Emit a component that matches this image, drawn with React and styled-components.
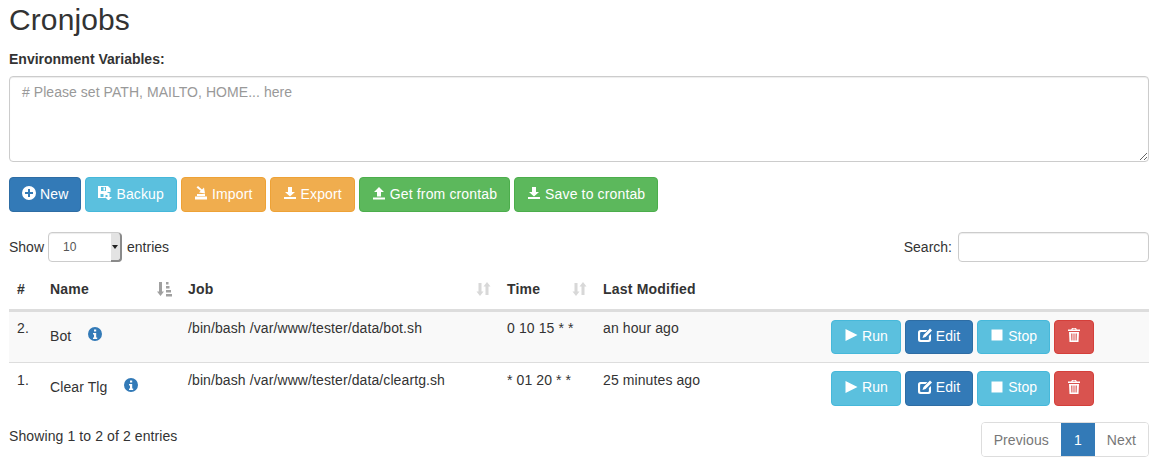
import React from 'react'
import styled, { createGlobalStyle } from 'styled-components'

const GlobalStyle = createGlobalStyle`
  * { box-sizing: border-box; }
  body {
    margin: 0;
    background: #fff;
    color: #333;
    font-family: "Liberation Sans", Arial, sans-serif;
    font-size: 14px;
    line-height: 20px;
    letter-spacing: .1px;
  }
`

const Page = styled.div`
  padding: 0 12px 0 9px;
`

const Title = styled.h1`
  margin: 0;
  padding-top: 3px;
  font-size: 30px;
  line-height: 33px;
  font-weight: 500;
`

const Label = styled.label`
  display: block;
  margin-top: 13px;
  height: 20px;
  font-weight: bold;
  letter-spacing: 0;
`

const EnvInput = styled.textarea`
  display: block;
  width: 100%;
  height: 86px;
  margin-top: 7px;
  padding: 5px 12px;
  border: 1px solid #ccc;
  border-radius: 4px;
  box-shadow: inset 0 1px 1px rgba(0, 0, 0, .075);
  font: 14px/20px "Liberation Sans", Arial, sans-serif;
  letter-spacing: .05px;
  &::placeholder { color: #999; opacity: 1; }
`

const Toolbar = styled.div`
  display: flex;
  gap: 4px;
  margin-top: 15px;
`

const colors = {
  primary: ['#337ab7', '#2e6da4'],
  info: ['#5bc0de', '#46b8da'],
  warning: ['#f0ad4e', '#eea236'],
  success: ['#5cb85c', '#4cae4c'],
  danger: ['#d9534f', '#d43f3a'],
}

const Button = styled.button`
  display: inline-flex;
  align-items: center;
  justify-content: center;
  gap: 4px;
  height: ${props => props.$h || 35}px;
  padding: 0 12px 2px;
  border: 1px solid ${props => colors[props.$kind][1]};
  border-radius: 4px;
  background: ${props => colors[props.$kind][0]};
  color: #fff;
  font: 14px/20px "Liberation Sans", Arial, sans-serif;
  letter-spacing: ${props => props.$h ? .05 : .14}px;
  white-space: nowrap;
`

const Glyph = styled.svg`
  width: 14px;
  height: 14px;
  margin-top: -1px;
  fill: currentColor;
  flex: none;
`

const TopRow = styled.div`
  display: flex;
  justify-content: space-between;
  align-items: center;
  height: 34px;
  margin-top: 18px;
`

const Inline = styled.div`
  display: flex;
  align-items: center;
  gap: ${props => props.$gap || 4}px;
  letter-spacing: 0;
`

const SelectBox = styled.div`
  position: relative;
  width: 74px;
  height: 30px;
  margin-right: 1px;
  padding: 4px 0 0 14px;
  border: 1px solid #ccc;
  border-radius: 4px;
  font-size: 12px;
  color: #555;
  box-shadow: inset 0 1px 1px rgba(0, 0, 0, .075);
`

const SelectArrow = styled.span`
  position: absolute;
  top: 0;
  right: -1px;
  bottom: -1px;
  width: 11px;
  background: #e3e3e3;
  border-right: 2px solid #8a8a8a;
  border-bottom: 2px solid #8a8a8a;
  border-radius: 0 4px 4px 0;
  &::after {
    content: "";
    position: absolute;
    top: 12px;
    left: 1px;
    border: 3.500px solid transparent;
    border-top: 4px solid #222;
    border-bottom: 0;
  }
`

const SearchInput = styled.input`
  width: 191px;
  height: 30px;
  border: 1px solid #ccc;
  border-radius: 4px;
  box-shadow: inset 0 1px 1px rgba(0, 0, 0, .075);
`

const Table = styled.table`
  width: 100%;
  margin-top: 6px;
  border-collapse: collapse;
  table-layout: fixed;
`

const Col = styled.col`
  width: ${props => props.$w}px;
`

const Th = styled.th`
  position: relative;
  height: 40px;
  padding: 8px;
  border-bottom: 3px solid #ddd;
  text-align: left;
  vertical-align: middle;
  font-weight: bold;
  letter-spacing: .2px;
`

const SortIcon = styled.svg`
  position: absolute;
  top: 11px;
  right: 8px;
  width: 15px;
  height: 16px;
  fill: ${props => props.$active ? '#a0a0a0' : '#d8d8d8'};
`

const Row = styled.tr`
  background: ${props => props.$striped ? '#f9f9f9' : '#fff'};
`

const Td = styled.td`
  height: ${props => props.$striped ? 52 : 51}px;
  padding: ${props => props.$striped ? 6 : 7}px 8px 0;
  vertical-align: top;
  border-bottom: ${props => props.$striped ? '1px solid #ddd' : '0'};
`

const NameTd = styled(Td)`
  padding-top: 14px;
`

const ActionTd = styled(Td)`
  padding-top: 8px;
`

const NameCell = styled.div`
  display: flex;
  align-items: center;
  gap: 17px;
`

const InfoIcon = styled.svg`
  width: 14px;
  height: 14px;
  margin-top: -3px;
  fill: #337ab7;
`

const Actions = styled.div`
  display: flex;
  gap: 4px;
`

const Footer = styled.div`
  display: flex;
  justify-content: space-between;
  align-items: flex-start;
  margin-top: 9px;
`

const Summary = styled.span`
  padding-top: 4px;
`

const Pager = styled.div`
  display: flex;
  height: 35px;
  border: 1px solid #ddd;
  border-radius: 4px;
  overflow: hidden;
`

const PageLink = styled.span`
  display: flex;
  align-items: center;
  padding: 0 ${props => props.$active ? 13 : 12}px;
  color: ${props => props.$active ? '#fff' : '#777'};
  background: ${props => props.$active ? '#337ab7' : '#fff'};
`

const icons = {
  plus: 'M7 0a7 7 0 1 0 0 14A7 7 0 0 0 7 0zm4 8H8v3H6V8H3V6h3V3h2v3h3z',
  backup: 'M0 0h10l2.500 2.500V6H9.500v3H7.500v3H0zM3 1v4h5V1zM5.500 1.500h1.500v3H5.500zM2.500 8v3h3V8zM9.500 7h2v4H14l-3.500 3.500L7 11h2.500z',
  import: 'M1 10.500h12V13.500H1zM3 8h8v2H3zM2.500 1.500L4 0l4 3.500L10 1.500l1 6-6-1 1.700-1.700z',
  export: 'M5 1h4v5h3L7 10.500 2 6h3zM1 11h12v2H1z',
  upload: 'M7 1l5 5H9v4.500H5V6H2zM1 11.500h12v2H1z',
  play: 'M1.500 1l12 6-12 6z',
  stop: 'M1.500 1.500h11v11h-11z',
  trash: 'M5 0h4l.8 1.500H13v1.500H1V1.500h3.200zM5.800 .8l-.3.7h3l-.3-.7zM2 4h10l-.5 10h-9zM4.200 5.500l.2 7h1v-7zM6.500 5.500v7h1v-7zM8.600 5.500v7h1l.2-7z',
  edit: 'M2.500 2H9.500L7.500 4H3a1 1 0 0 0-.9.9v6.200a1 1 0 0 0 .9.9h7a1 1 0 0 0 .9-.9V8L13 6v5.500a2.500 2.500 0 0 1-2.500 2.500h-8A2.500 2.500 0 0 1 0 11.500v-7A2.500 2.500 0 0 1 2.500 2zM12 .5l2 2-6.500 6.500-3 1 1-3z',
}

const Icon = ({ name }) => (
  <Glyph viewBox="0 0 14 14"><path d={icons[name]} fillRule="evenodd" /></Glyph>
)

const Sort = ({ active }) => (
  <SortIcon viewBox="0 0 15 16" $active={active}>
    {active
      ? <path d="M2 1h3v9.500h2L3.500 15 0 10.500h2zM9 1h2.500v2.500H9zM9 5h3.500v2.500H9zM9 9h5v2.500H9zM9 13h6v2.500H9z" />
      : <path d="M2.500 2h3v8.500h2L4 15 .5 10.500h2zM9.500 14V5.500h-2L11 1l3.500 4.500h-2V14z" />}
  </SortIcon>
)

const Info = () => (
  <InfoIcon viewBox="0 0 14 14">
    <path fillRule="evenodd" d="M7 0a7 7 0 1 0 0 14A7 7 0 0 0 7 0zM6 2.500h2.200v2H6zM5 6h3.200v4.500h1V12H5v-1.500h1V7.500H5z" />
  </InfoIcon>
)

const jobs = [
  { id: '2.', name: 'Bot', job: '/bin/bash /var/www/tester/data/bot.sh', time: '0 10 15 * *', modified: 'an hour ago', striped: true, h: 34 },
  { id: '1.', name: 'Clear Tlg', job: '/bin/bash /var/www/tester/data/cleartg.sh', time: '* 01 20 * *', modified: '25 minutes ago', h: 35 },
]

const App = () => {
  return (
    <Page>
      <GlobalStyle />
      <Title>Cronjobs</Title>
      <Label>Environment Variables:</Label>
      <EnvInput placeholder="# Please set PATH, MAILTO, HOME... here" />
      <Toolbar>
        <Button $kind="primary"><Icon name="plus" />New</Button>
        <Button $kind="info"><Icon name="backup" />Backup</Button>
        <Button $kind="warning"><Icon name="import" />Import</Button>
        <Button $kind="warning"><Icon name="export" />Export</Button>
        <Button $kind="success"><Icon name="upload" />Get from crontab</Button>
        <Button $kind="success"><Icon name="export" />Save to crontab</Button>
      </Toolbar>
      <TopRow>
        <Inline>Show <SelectBox>10<SelectArrow /></SelectBox> entries</Inline>
        <Inline $gap={6}>Search: <SearchInput /></Inline>
      </TopRow>
      <Table>
        <colgroup>
          <Col $w={33} /><Col $w={138} /><Col $w={319} /><Col $w={96} /><Col $w={228} /><Col />
        </colgroup>
        <thead>
          <tr>
            <Th>#</Th>
            <Th>Name<Sort active /></Th>
            <Th>Job<Sort /></Th>
            <Th>Time<Sort /></Th>
            <Th>Last Modified</Th>
            <Th />
          </tr>
        </thead>
        <tbody>
          {jobs.map(j => (
            <Row key={j.id} $striped={j.striped}>
              <Td $striped={j.striped}>{j.id}</Td>
              <NameTd $striped={j.striped}><NameCell>{j.name}<Info /></NameCell></NameTd>
              <Td $striped={j.striped}>{j.job}</Td>
              <Td $striped={j.striped}>{j.time}</Td>
              <Td $striped={j.striped}>{j.modified}</Td>
              <ActionTd $striped={j.striped}>
                <Actions>
                  <Button $kind="info" $h={j.h}><Icon name="play" />Run</Button>
                  <Button $kind="primary" $h={j.h}><Icon name="edit" />Edit</Button>
                  <Button $kind="info" $h={j.h}><Icon name="stop" />Stop</Button>
                  <Button $kind="danger" $h={j.h}><Icon name="trash" /></Button>
                </Actions>
              </ActionTd>
            </Row>
          ))}
        </tbody>
      </Table>
      <Footer>
        <Summary>Showing 1 to 2 of 2 entries</Summary>
        <Pager>
          <PageLink>Previous</PageLink>
          <PageLink $active>1</PageLink>
          <PageLink>Next</PageLink>
        </Pager>
      </Footer>
    </Page>
  )
}

export default App
